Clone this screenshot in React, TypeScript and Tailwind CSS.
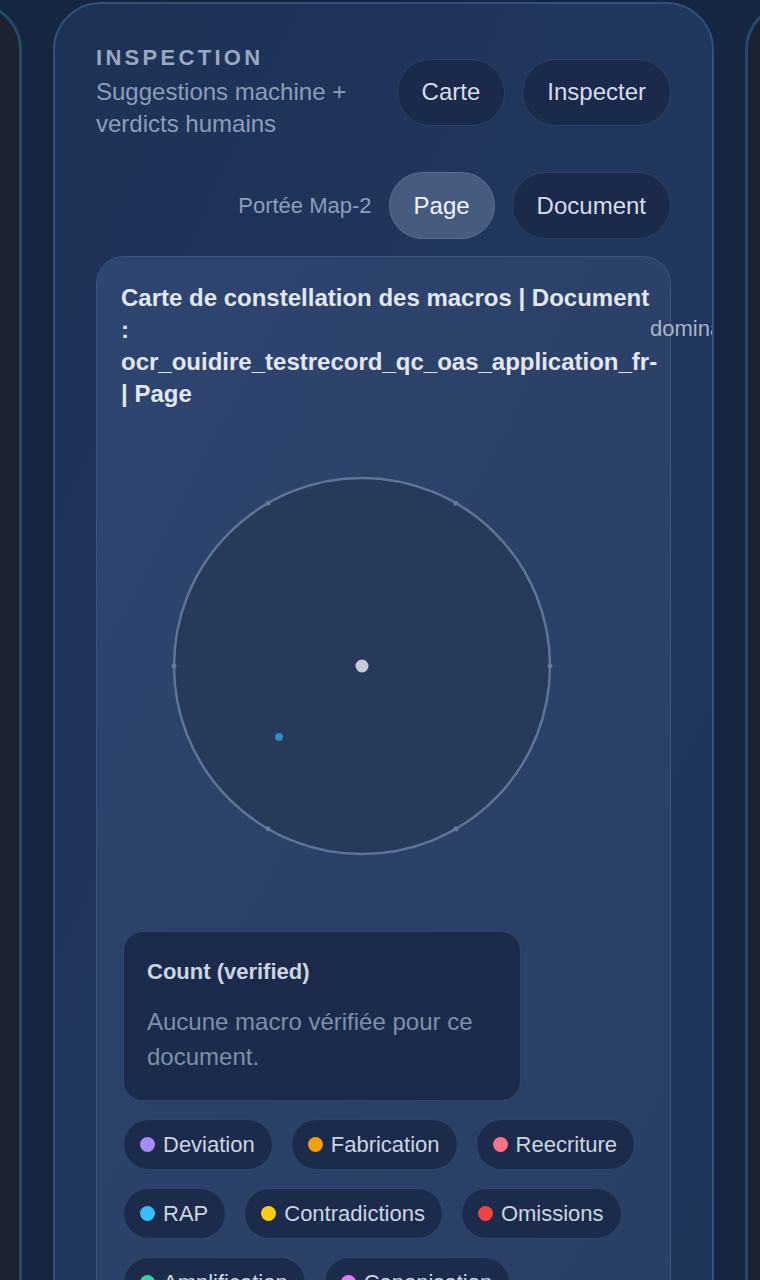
import React from "react";

const chips: { label: string; color: string }[][] = [
  [
    { label: "Deviation", color: "bg-[#a78bfa]" },
    { label: "Fabrication", color: "bg-[#f59e0b]" },
    { label: "Reecriture", color: "bg-[#fb7185]" },
  ],
  [
    { label: "RAP", color: "bg-[#38bdf8]" },
    { label: "Contradictions", color: "bg-[#facc15]" },
    { label: "Omissions", color: "bg-[#ef4444]" },
  ],
  [
    { label: "Amplification", color: "bg-[#34d399]" },
    { label: "Canonisation", color: "bg-[#e879f9]" },
  ],
];

function Pill({ children, active }: { children: React.ReactNode; active?: boolean }) {
  return (
    <div
      className={
        active
          ? "h-[67px] px-[24px] flex items-center rounded-full border border-[#5c6f93] bg-[#475b80] text-[24px] text-[#f1f5f9]"
          : "h-[67px] px-[24px] flex items-center rounded-full border border-[#2f4063] bg-[#1b294b] text-[24px] text-[#d6dde8]"
      }
    >
      {children}
    </div>
  );
}

export default function App() {
  const cx = 241;
  const cy = 236;
  const r = 188;
  const ticks = [0, 60, 120, 180, 240, 300];
  return (
    <div
      className="w-[760px] h-[1280px] overflow-hidden bg-[#162540] flex gap-[31px] pt-[2px]"
      style={{ fontFamily: '"Liberation Sans", Arial, sans-serif' }}
    >
      {/* left neighbour panel */}
      <div className="ml-[-639px] w-[661px] shrink-0 h-[1400px] rounded-[48px] border-[3px] border-[#234a68] bg-[#1c2232]" />

      {/* main panel */}
      <div className="relative w-[661px] shrink-0 h-[1400px] rounded-[48px] border-2 border-[#33507a] bg-gradient-to-br from-[#1e3157] via-[#22375f] to-[#1f3459] overflow-hidden px-[41px] pt-[40px]">
        {/* header */}
        <div className="flex items-center justify-between">
          <div className="flex flex-col">
            <div className="text-[22px] leading-[28px] font-bold tracking-[0.15em] text-[#9aa8be]">INSPECTION</div>
            <div className="mt-[4px] text-[24px] leading-[32px] text-[#8d9dba] w-[290px]">Suggestions machine + verdicts humains</div>
          </div>
          <div className="flex gap-[17px]">
            <Pill>Carte</Pill>
            <Pill>Inspecter</Pill>
          </div>
        </div>

        {/* scope row */}
        <div className="mt-[32px] flex items-center justify-end gap-[17px]">
          <div className="text-[22px] text-[#8e9dba]">Portée Map-2</div>
          <Pill active>Page</Pill>
          <Pill>Document</Pill>
        </div>

        {/* card */}
        <div className="relative mt-[17px] rounded-[28px] border border-[#3d5580] bg-gradient-to-br from-[#2e4570] via-[#2c4169] to-[#2a3f66] pl-[24px] pr-[10px] pt-[25px] pb-[40px]">
          <div className="absolute left-[553px] top-[59px] text-[22px] leading-[26px] text-[#a8b4c6] whitespace-nowrap">dominant</div>
          <div className="text-[24px] leading-[32px] font-bold text-[#e2e8f0] w-[532px]">
            Carte de constellation des macros | Document : ocr_ouidire_testrecord_qc_oas_application_fr- | Page
          </div>

          <svg width="526" height="472" className="mt-[20px] block" viewBox="0 0 526 472">
            <circle cx={cx} cy={cy} r={r} fill="#283a5c" stroke="#5f7496" strokeWidth="2.5" />
            {ticks.map((a) => {
              const rad = (a * Math.PI) / 180;
              return (
                <circle
                  key={a}
                  cx={cx + r * Math.cos(rad)}
                  cy={cy + r * Math.sin(rad)}
                  r="2.5"
                  fill="#64799b"
                />
              );
            })}
            <circle cx={cx} cy={cy} r="6.5" fill="#c6ccd8" />
            <circle cx={158} cy={307} r="4" fill="#2f8ac0" />
          </svg>

          {/* count box */}
          <div className="mt-[29px] ml-[2px] w-[398px] rounded-[20px] border border-[#31456a] bg-[#1c2b4c] pl-[23px] pr-[20px] pt-[26px] pb-[26px]">
            <div className="text-[22px] leading-[28px] font-bold text-[#cbd5e1]">Count (verified)</div>
            <div className="mt-[18px] text-[24px] leading-[35px] text-[#7f8fa9]">
              Aucune macro vérifiée pour ce document.
            </div>
          </div>

          {/* legend */}
          <div className="mt-[18px] ml-[2px] flex flex-col gap-[18px]">
            {chips.map((row, i) => (
              <div key={i} className="flex gap-[18px]">
                {row.map((c) => (
                  <div
                    key={c.label}
                    className="h-[51px] flex items-center gap-[8px] pl-[16px] pr-[17px] rounded-full border border-[#31456a] bg-[#1c2b4c] text-[22px] text-[#cbd5e1]"
                  >
                    <span className={`w-[15px] h-[15px] rounded-full ${c.color}`} />
                    <span>{c.label}</span>
                  </div>
                ))}
              </div>
            ))}
          </div>
        </div>
      </div>

      {/* right neighbour panel */}
      <div className="w-[661px] shrink-0 h-[1400px] rounded-[48px] border-[3px] border-[#234a68] bg-[#1c2232]" />
    </div>
  );
}
